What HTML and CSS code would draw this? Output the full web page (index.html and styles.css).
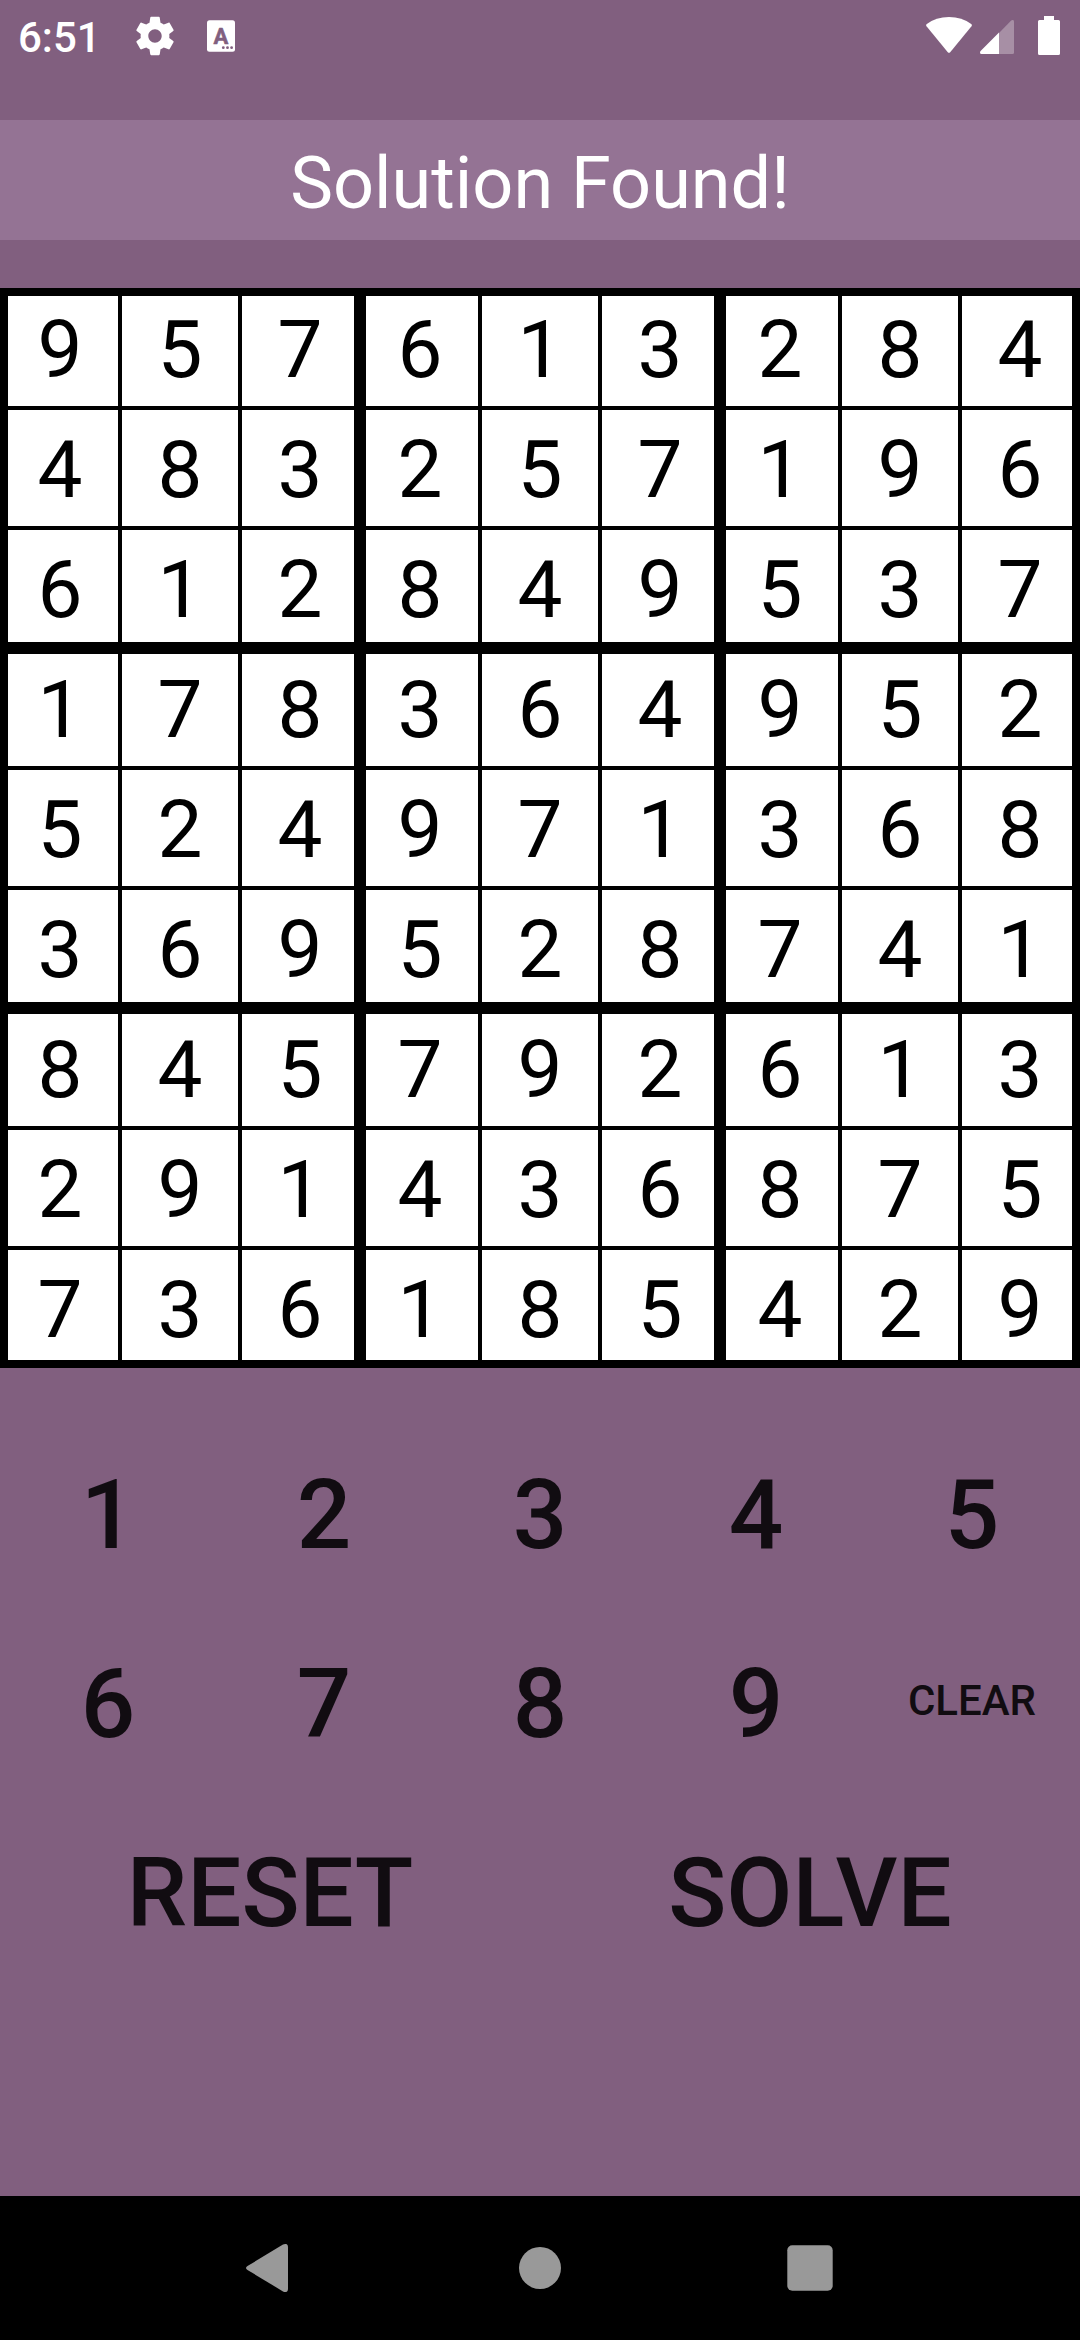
FILE: index.html
```html
<!DOCTYPE html>
<html lang="en">
<head>
<meta charset="utf-8">
<title>Sudoku Solver</title>
<link rel="stylesheet" href="styles.css">
</head>
<body>
<div class="screen">
  <header class="status-bar">
    <div class="status-left">
      <span class="clock">6:51</span>
      <svg class="gear" viewBox="0 0 24 24"><path d="M19.43 12.98c.04-.32.07-.64.07-.98s-.03-.66-.07-.98l2.11-1.65c.19-.15.24-.42.12-.64l-2-3.46c-.12-.22-.39-.3-.61-.22l-2.49 1c-.52-.4-1.08-.73-1.69-.98l-.38-2.65C14.46 2.18 14.25 2 14 2h-4c-.25 0-.46.18-.49.42l-.38 2.65c-.61.25-1.17.59-1.69.98l-2.49-1c-.23-.09-.49 0-.61.22l-2 3.46c-.13.22-.07.49.12.64l2.11 1.65c-.04.32-.07.65-.07.98s.03.66.07.98l-2.11 1.65c-.19.15-.24.42-.12.64l2 3.46c.12.22.39.3.61.22l2.49-1c.52.4 1.08.73 1.69.98l.38 2.65c.03.24.24.42.49.42h4c.25 0 .46-.18.49-.42l.38-2.65c.61-.25 1.17-.59 1.69-.98l2.49 1c.23.09.49 0 .61-.22l2-3.46c.12-.22.07-.49-.12-.64l-2.11-1.65zM12 15.5c-1.93 0-3.5-1.57-3.5-3.5s1.57-3.5 3.5-3.5 3.5 1.57 3.5 3.5-1.57 3.5-3.5 3.5z"/></svg>
      <svg class="keyboard" viewBox="0 0 28 72"><rect y="20.3" width="28" height="31.4" rx="2.5"/><text class="keyboard-letter" x="14" y="43.5">A</text><g class="keyboard-dots"><circle cx="16.3" cy="47.7" r="1.4"/><circle cx="20.5" cy="47.7" r="1.4"/><circle cx="24.6" cy="47.7" r="1.4"/></g></svg>
    </div>
    <div class="status-right">
      <svg class="wifi" viewBox="0 0 46 72"><path d="M.5 26.200Q-.4 25 .8 24Q10 17 23 17T45.200 24Q46.400 25 45.500 26.200L24.200 52.200Q23 53.500 21.800 52.200Z"/></svg>
      <svg class="signal" viewBox="0 0 34 72"><path class="signal-dim" d="M19 33L31.200 20.600Q32 19.800 33 20Q34 20.300 34 21.500V52.500Q34 54 32.500 54H19Z"/><path d="M19 32.500V54H1.500Q0 54 0 52.500Q0 51.500 .6 50.900Z"/></svg>
      <svg class="battery" viewBox="0 0 22 72"><path d="M6 16H16V20H20.500Q22 20 22 21.500V53.500Q22 55 20.500 55H1.500Q0 55 0 53.500V21.500Q0 20 1.500 20H6Z"/></svg>
    </div>
  </header>

  <h1 class="message">Solution Found!</h1>

  <main>
    <div class="board">
      <span>9</span><span>5</span><span>7</span><span>6</span><span>1</span><span>3</span><span>2</span><span>8</span><span>4</span>
      <span>4</span><span>8</span><span>3</span><span>2</span><span>5</span><span>7</span><span>1</span><span>9</span><span>6</span>
      <span>6</span><span>1</span><span>2</span><span>8</span><span>4</span><span>9</span><span>5</span><span>3</span><span>7</span>
      <span>1</span><span>7</span><span>8</span><span>3</span><span>6</span><span>4</span><span>9</span><span>5</span><span>2</span>
      <span>5</span><span>2</span><span>4</span><span>9</span><span>7</span><span>1</span><span>3</span><span>6</span><span>8</span>
      <span>3</span><span>6</span><span>9</span><span>5</span><span>2</span><span>8</span><span>7</span><span>4</span><span>1</span>
      <span>8</span><span>4</span><span>5</span><span>7</span><span>9</span><span>2</span><span>6</span><span>1</span><span>3</span>
      <span>2</span><span>9</span><span>1</span><span>4</span><span>3</span><span>6</span><span>8</span><span>7</span><span>5</span>
      <span>7</span><span>3</span><span>6</span><span>1</span><span>8</span><span>5</span><span>4</span><span>2</span><span>9</span>
    </div>

    <div class="keypad">
      <button>1</button><button>2</button><button>3</button><button>4</button><button>5</button>
      <button>6</button><button>7</button><button>8</button><button>9</button><button class="clear">CLEAR</button>
    </div>
    <div class="actions">
      <button>RESET</button><button>SOLVE</button>
    </div>
  </main>

  <nav class="nav-bar">
    <svg class="nav-icon" viewBox="0 0 48 48"><path d="M37 .6Q42 -1.500 42 3.500V44.500Q42 49.500 37 47.400L1.500 26Q-1.500 24 1.500 22Z"/></svg>
    <svg class="nav-icon" viewBox="0 0 48 48"><circle cx="24" cy="24" r="21"/></svg>
    <svg class="nav-icon" viewBox="0 0 48 48"><rect x="1.300" y="1.300" width="45.400" height="45.400" rx="5"/></svg>
  </nav>
</div>
</body>
</html>
```
FILE: styles.css
```css
* {
  box-sizing: border-box;
}

body {
  margin: 0;
  font-family: Roboto, sans-serif;
}

.screen {
  display: flex;
  flex-direction: column;
  width: 1080px;
  height: 2340px;
  background: #815f7f;
}

/* Status bar */
.status-bar {
  display: flex;
  justify-content: space-between;
  height: 72px;
  padding: 0 20px 0 18px;
  color: #fff;
}

.status-left,
.status-right {
  display: flex;
  align-items: center;
}

.status-bar svg {
  display: block;
  height: 72px;
  fill: #fff;
}

.clock {
  align-self: flex-start;
  width: 114px;
  font-size: 42px;
  font-weight: 500;
  line-height: 76px;
}

.status-bar .gear {
  width: 46px;
  height: 46px;
}

.keyboard {
  width: 28px;
  margin-left: 29px;
}

.keyboard-letter {
  fill: #815f7f;
  stroke: #815f7f;
  stroke-width: 0.6;
  stroke-linejoin: round;
  font-size: 22px;
  font-weight: 700;
  text-anchor: middle;
}

.keyboard-dots {
  fill: #815f7f;
}

.wifi {
  width: 46px;
  margin-right: 8px;
}

.signal {
  width: 34px;
  margin-right: 24px;
}

.signal-dim {
  fill: #a78fa5;
}

.battery {
  width: 22px;
}

/* Result message */
.message {
  height: 120px;
  margin: 48px 0;
  padding-top: 4px;
  background: #947394;
  color: #fff;
  font-size: 72px;
  font-weight: 400;
  line-height: 120px;
  text-align: center;
}

/* Board: every cell paints its own share of the grid lines */
.board {
  display: grid;
  grid-template-columns: repeat(9, 120px);
  grid-auto-rows: 120px;
  background: #fff;
}

.board span {
  --left: 2px;
  --right: -2px;
  --top: 2px;
  --bottom: -2px;
  padding-top: 2px;
  box-shadow:
    inset var(--left) 0 #000,
    inset var(--right) 0 #000,
    inset 0 var(--top) #000,
    inset 0 var(--bottom) #000;
  font-size: 80px;
  line-height: 120px;
  text-align: center;
}

.board span:nth-child(3n + 1) {
  --left: 6px;
}

.board span:nth-child(3n) {
  --right: -6px;
}

.board span:nth-child(9n + 1) {
  --left: 8px;
}

.board span:nth-child(9n) {
  --right: -8px;
}

.board span:nth-child(27n + 1),
.board span:nth-child(27n + 2),
.board span:nth-child(27n + 3),
.board span:nth-child(27n + 4),
.board span:nth-child(27n + 5),
.board span:nth-child(27n + 6),
.board span:nth-child(27n + 7),
.board span:nth-child(27n + 8),
.board span:nth-child(27n + 9) {
  --top: 6px;
}

.board span:nth-child(27n + 19),
.board span:nth-child(27n + 20),
.board span:nth-child(27n + 21),
.board span:nth-child(27n + 22),
.board span:nth-child(27n + 23),
.board span:nth-child(27n + 24),
.board span:nth-child(27n + 25),
.board span:nth-child(27n + 26),
.board span:nth-child(27n + 27) {
  --bottom: -6px;
}

.board span:nth-child(-n + 9) {
  --top: 8px;
}

.board span:nth-child(n + 73) {
  --bottom: -8px;
}

/* Buttons */
.keypad,
.actions {
  display: grid;
  grid-auto-rows: 189px;
}

.keypad {
  grid-template-columns: repeat(5, 1fr);
  margin-top: 53px;
}

.actions {
  grid-template-columns: repeat(2, 1fr);
}

button {
  padding: 0;
  border: 0;
  background: none;
  color: #110c11;
  font-family: inherit;
  font-size: 96px;
  font-weight: 500;
  line-height: 189px;
}

.clear {
  padding-bottom: 8px;
  font-size: 42px;
  line-height: 181px;
}

/* Navigation bar */
.nav-bar {
  display: grid;
  grid-template-columns: repeat(3, 270px);
  place-content: center;
  place-items: center;
  height: 144px;
  margin-top: auto;
  background: #000;
}

.nav-icon {
  width: 48px;
  height: 48px;
  fill: #999;
}
```
